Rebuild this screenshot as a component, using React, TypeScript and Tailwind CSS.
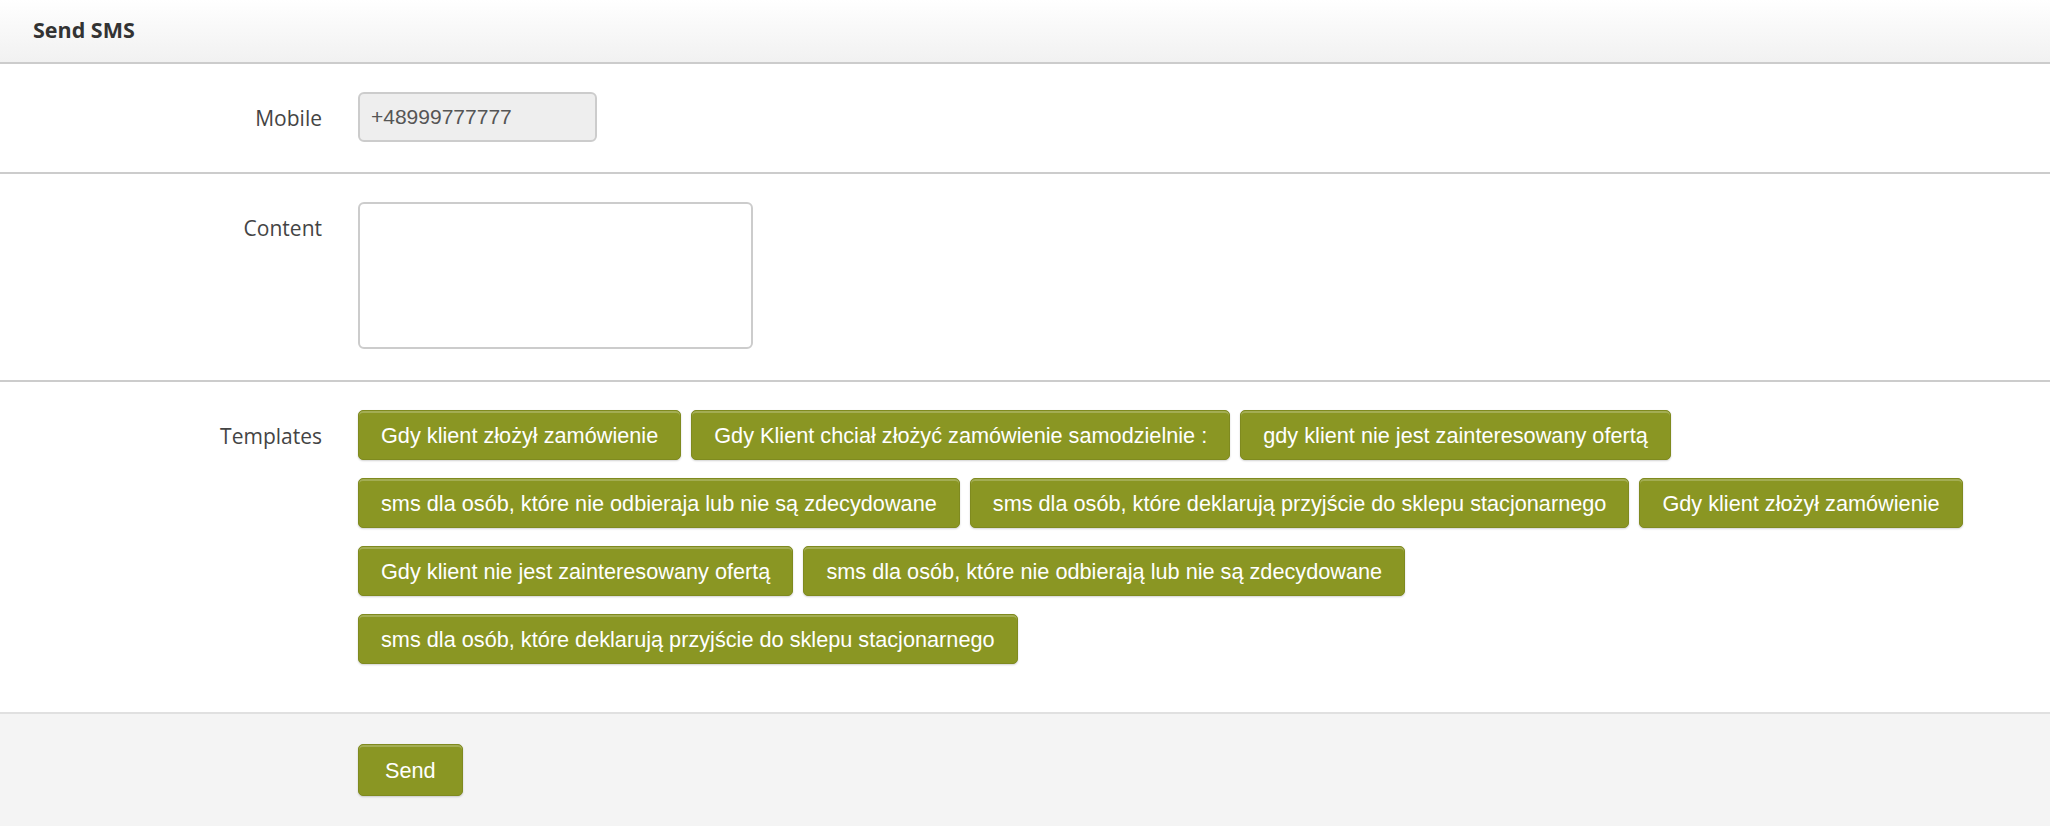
import React from 'react';

const templates = [
    'Gdy klient złożył zamówienie',
    'Gdy Klient chciał złożyć zamówienie samodzielnie :',
    'gdy klient nie jest zainteresowany ofertą',
    'sms dla osób, które nie odbieraja lub nie są zdecydowane',
    'sms dla osób, które deklarują przyjście do sklepu stacjonarnego',
    'Gdy klient złożył zamówienie',
    'Gdy klient nie jest zainteresowany ofertą',
    'sms dla osób, które nie odbierają lub nie są zdecydowane',
    'sms dla osób, które deklarują przyjście do sklepu stacjonarnego',
];

const btn =
    "bg-[#8a9623] border border-[#7f8a1f] rounded-[5px] text-white text-[21.7px] font-['Liberation_Sans',Arial,sans-serif] shadow-[inset_0_2px_0_rgba(255,255,255,0.22),0_1px_2px_rgba(0,0,0,0.18)] whitespace-nowrap";

const label = "w-[322px] shrink-0 text-right text-[21px] leading-[30px] text-[#444]";

export default function App() {
    return (
        <div className="min-h-[826px] bg-white font-['Open_Sans',sans-serif]">
            {/* header */}
            <div className="h-[64px] flex items-center px-[33px] border-b-2 border-[#cccccc] bg-gradient-to-b from-white to-[#f1f1f1]">
                <h1 className="text-[21.5px] font-bold text-[#333] pb-[2px]">Send SMS</h1>
            </div>

            {/* mobile */}
            <div className="flex gap-[36px] pt-[28px] pb-[30px] border-b-2 border-[#cccccc]">
                <label className={`${label} pt-[11px]`}>Mobile</label>
                <input
                    readOnly
                    value="+48999777777"
                    className="w-[239px] h-[50px] px-[11px] bg-[#eeeeee] border-2 border-[#cccccc] rounded-[6px] text-[21px] text-[#555] font-['Liberation_Sans',Arial,sans-serif] outline-none"
                />
            </div>

            {/* content */}
            <div className="flex gap-[36px] pt-[28px] pb-[31px] border-b-2 border-[#cccccc]">
                <label className={`${label} pt-[11px]`}>Content</label>
                <textarea className="w-[395px] h-[147px] bg-white border-2 border-[#cccccc] rounded-[6px] resize-none outline-none" />
            </div>

            {/* templates */}
            <div className="flex gap-[36px] pt-[28px] pb-[48px] border-b-2 border-[#e0e0e0]">
                <label className={`${label} pt-[11px]`}>Templates</label>
                <div className="flex flex-wrap gap-x-[10px] gap-y-[18px] max-w-[1640px]">
                    {templates.map((t, i) => (
                        <button key={i} className={`${btn} h-[50px] px-[22px] pt-[2px]`}>
                            {t}
                        </button>
                    ))}
                </div>
            </div>

            {/* footer */}
            <div className="bg-[#f4f4f4] pt-[30px] pb-[30px] pl-[358px]">
                <button className={`${btn} h-[52px] px-[26px] pt-[2px]`}>Send</button>
            </div>
        </div>
    );
}
